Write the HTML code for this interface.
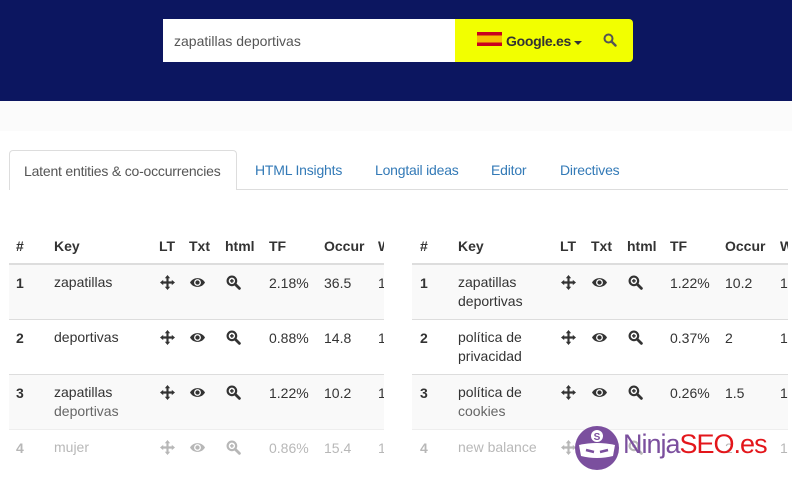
<!DOCTYPE html>
<html><head><meta charset="utf-8"><style>
*{margin:0;padding:0;box-sizing:border-box}
body{width:792px;height:485px;overflow:hidden;background:#fff;font-family:"Liberation Sans",Arial,sans-serif;position:relative;color:#333}
.hdr{position:absolute;left:0;top:0;width:792px;height:101px;background:#0c1660}
.inp{position:absolute;left:163px;top:19px;width:292px;height:43px;background:#fff;font-size:14px;color:#555;padding:14px 0 0 11px}
.yel{position:absolute;left:455px;top:19px;width:178px;height:43px;background:#f2ff00;border-radius:0 4px 4px 0}
.flag{position:absolute;left:22px;top:13px;width:25px;height:14px;background:linear-gradient(#c8001e 0 25%,#f6c000 25% 75%,#c8001e 75%)}
.gtxt{position:absolute;left:51px;top:14px;font-weight:bold;font-size:14px;color:#333;letter-spacing:-0.3px}
.caret{position:absolute;left:119px;top:22px;border-left:4px solid transparent;border-right:4px solid transparent;border-top:4px solid #333}
.band{position:absolute;left:0;top:101px;width:792px;height:30px;background:#fbfbfb}
.tabline{position:absolute;left:9px;top:189px;width:779px;height:1px;background:#ddd}
.tab{position:absolute;left:9px;top:150px;width:228px;height:40px;background:#fff;border:1px solid #ddd;border-bottom:none;border-radius:4px 4px 0 0;font-size:14px;color:#555;padding:12px 0 0 14px;letter-spacing:-0.2px}
.lnk{position:absolute;top:162px;font-size:14px;color:#337ab7;letter-spacing:-0.2px}
.t{position:absolute;font-size:14px}
.h{font-weight:bold;color:#333}
.row{position:absolute;height:55px;border-top:1px solid #ddd}
.hl{position:absolute;height:2px;background:#ddd;top:263px}
svg.i{position:absolute}
.fade{opacity:.35}
</style></head><body>
<div class="hdr">
<div class="inp">zapatillas deportivas</div>
<div class="yel"><div class="flag"></div><div class="gtxt">Google.es</div><div class="caret"></div>
<svg style="position:absolute;left:148px;top:14px" width="14" height="14" viewBox="0 0 14 14"><circle cx="5.5" cy="5.5" r="4" fill="none" stroke="#555" stroke-width="2"/><path d="M8.5 8.5L12.5 12.5" stroke="#555" stroke-width="2.4" stroke-linecap="round"/></svg></div>
</div>
<div class="band"></div>
<div class="tabline"></div>
<div class="tab">Latent entities &amp; co-occurrencies</div>
<div class="lnk" style="left:255px">HTML Insights</div>
<div class="lnk" style="left:375px">Longtail ideas</div>
<div class="lnk" style="left:491px">Editor</div>
<div class="lnk" style="left:560px">Directives</div>

<div class="row" style="left:9px;top:264px;width:375px;background:#f9f9f9"></div>
<div class="row" style="left:9px;top:319px;width:375px"></div>
<div class="row" style="left:9px;top:374px;width:375px;background:#f9f9f9"></div>
<div class="row" style="left:9px;top:429px;width:375px;border-color:#eee"></div>
<div class="row" style="left:412px;top:264px;width:376px;background:#f9f9f9"></div>
<div class="row" style="left:412px;top:319px;width:376px"></div>
<div class="row" style="left:412px;top:374px;width:376px;background:#f9f9f9"></div>
<div class="row" style="left:412px;top:429px;width:376px;border-color:#eee"></div>
<div class="hl" style="left:9px;width:375px"></div>
<div class="hl" style="left:412px;width:376px"></div>

<div id="c"></div>
<div style="position:absolute;left:0;top:0;width:792px;height:485px;overflow:hidden;pointer-events:none">
<div class="t h" style="left:16px;top:238px">#</div><div class="t h" style="left:54px;top:238px">Key</div><div class="t h" style="left:159px;top:238px">LT</div><div class="t h" style="left:189px;top:238px">Txt</div><div class="t h" style="left:225px;top:238px">html</div><div class="t h" style="left:269px;top:238px">TF</div><div class="t h" style="left:324px;top:238px">Occur</div><div class="t h" style="left:378px;top:238px;width:6px;overflow:hidden">W</div>
<div class="t h" style="left:420px;top:238px">#</div><div class="t h" style="left:458px;top:238px">Key</div><div class="t h" style="left:560px;top:238px">LT</div><div class="t h" style="left:591px;top:238px">Txt</div><div class="t h" style="left:627px;top:238px">html</div><div class="t h" style="left:670px;top:238px">TF</div><div class="t h" style="left:725px;top:238px">Occur</div><div class="t h" style="left:780px;top:238px;width:8px;overflow:hidden">W</div>
</div>
<script>
var L=[[16,54,159,189,225,269,324,378,6],[420,458,560,591,627,670,725,780,8]];
var D=[[["1","zapatillas","2.18%","36.5"],["2","deportivas","0.88%","14.8"],["3","zapatillas<br><span style='color:#666'>deportivas</span>","1.22%","10.2"],["4","mujer","0.86%","15.4"]],
[["1","zapatillas<br>deportivas","1.22%","10.2"],["2","política de<br>privacidad","0.37%","2"],["3","política de<br><span style='color:#666'>cookies</span>","0.26%","1.5"],["4","new balance","","2"]]];
var h="";
var mv='<path d="M7 0L9.5 3H8V6H11V4.5L14 7L11 9.5V8H8V11H9.5L7 14L4.5 11H6V8H3V9.5L0 7L3 4.5V6H6V3H4.5Z" fill="#333"/>';
var ey='<path d="M0 7C3 1.5 11 1.5 14 7C11 12.5 3 12.5 0 7Z" fill="#333"/><circle cx="7" cy="7" r="3.2" fill="#fff"/><circle cx="7" cy="7" r="2" fill="#333"/>';
var zm='<circle cx="5.5" cy="5.5" r="4" fill="none" stroke="#333" stroke-width="2"/><path d="M3.8 5.5H7.2M5.5 3.8V7.2" stroke="#333" stroke-width="1.4"/><path d="M8.5 8.5L12.5 12.5" stroke="#333" stroke-width="2.6" stroke-linecap="round"/>';
for(var s=0;s<2;s++){var c=L[s];for(var r=0;r<4;r++){var d=D[s][r];var y=275+r*55;var f=r==3?' fade':'';
h+='<div class="t h'+f+'" style="left:'+c[0]+'px;top:'+y+'px">'+d[0]+'</div>';
h+='<div class="t'+f+'" style="left:'+c[1]+'px;top:'+y+'px;line-height:19px;margin-top:-2px">'+d[1]+'</div>';
h+='<svg class="i'+f+'" style="left:'+(c[2]+1)+'px;top:'+(y)+'px" width="15" height="15" viewBox="0 0 14 14">'+mv+'</svg>';
h+='<svg class="i'+f+'" style="left:'+(c[3]+1)+'px;top:'+(y)+'px" width="15" height="15" viewBox="0 0 14 14">'+ey+'</svg>';
h+='<svg class="i'+f+'" style="left:'+(c[4]+1)+'px;top:'+(y)+'px" width="15" height="15" viewBox="0 0 14 14">'+zm+'</svg>';
h+='<div class="t'+f+'" style="left:'+c[5]+'px;top:'+y+'px">'+d[2]+'</div>';
h+='<div class="t'+f+'" style="left:'+c[6]+'px;top:'+y+'px">'+d[3]+'</div>';
h+='<div class="t'+f+'" style="left:'+c[7]+'px;top:'+y+'px;width:'+c[8]+'px;overflow:hidden">1</div>';}}
document.getElementById("c").innerHTML=h;
</script>
<svg style="position:absolute;left:574px;top:425px" width="46" height="46" viewBox="0 0 46 46"><circle cx="23" cy="23" r="22" fill="#7b4f9e"/><circle cx="23" cy="11" r="6" fill="#fff"/><text x="23" y="15" font-size="10" text-anchor="middle" fill="#7b4f9e" font-family="Liberation Sans" font-weight="bold">S</text><path d="M5 20Q23 16 41 20L39 31Q23 35 7 31Z" fill="#fff"/><path d="M12 25L20 27M34 25L26 27" stroke="#7b4f9e" stroke-width="2.5"/></svg>
<div style="position:absolute;left:623px;top:429px;font-size:27px;font-family:'Liberation Sans',sans-serif;letter-spacing:-1px"><span style="color:#7b4f9e">Ninja</span><span style="color:#e3161b">SEO.es</span></div>
</body></html>
